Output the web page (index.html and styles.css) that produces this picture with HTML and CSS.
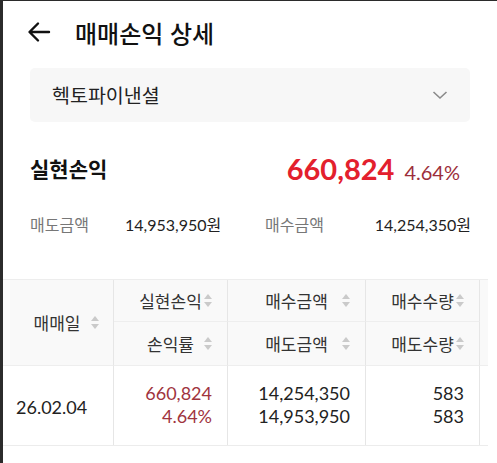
FILE: index.html
```html
<!DOCTYPE html>
<html lang="ko">
<head>
<meta charset="utf-8">
<link rel="stylesheet" href="styles.css">
</head>
<body>
<div class="frame">
  <header class="topbar">
    <svg class="back" width="24" height="24" viewBox="0 0 24 24"><path d="M22 12H3M11 3.5L2.5 12L11 20.5" fill="none" stroke="#111" stroke-width="2.4" stroke-linecap="round" stroke-linejoin="round"/></svg>
    <h1 class="title">매매손익 상세</h1>
  </header>

  <div class="select">
    <span class="select-text">헥토파이낸셜</span>
    <svg class="chev" width="16" height="10" viewBox="0 0 16 10"><path d="M1.5 2L8 8L14.5 2" fill="none" stroke="#8a8a8a" stroke-width="1.6"/></svg>
  </div>

  <div class="summary">
    <span class="summary-label">실현손익</span>
    <div class="summary-value">
      <span class="big">660,824</span>
      <span class="pct">4.64%</span>
    </div>
  </div>

  <div class="amounts">
    <div class="amount">
      <span class="amount-label">매도금액</span>
      <span class="amount-value">14,953,950원</span>
    </div>
    <div class="amount amount-right">
      <span class="amount-label">매수금액</span>
      <span class="amount-value">14,254,350원</span>
    </div>
  </div>

  <div class="table-wrap">
    <div class="table">
      <div class="th c1 span2"><span class="lbl">매매일</span><i class="sort"></i></div>
      <div class="th c2"><span class="lbl">실현손익</span><i class="sort"></i></div>
      <div class="th c3"><span class="lbl">매수금액</span><i class="sort"></i></div>
      <div class="th c4"><span class="lbl">매수수량</span><i class="sort"></i></div>
      <div class="th c5 span2"></div>
      <div class="th c2 row2"><span class="lbl">손익률</span><i class="sort"></i></div>
      <div class="th c3 row2"><span class="lbl">매도금액</span><i class="sort"></i></div>
      <div class="th c4 row2"><span class="lbl">매도수량</span><i class="sort"></i></div>

      <div class="td c1 date">26.02.04</div>
      <div class="td num red"><span>660,824</span><span>4.64%</span></div>
      <div class="td num"><span>14,254,350</span><span>14,953,950</span></div>
      <div class="td num"><span>583</span><span>583</span></div>
      <div class="td c5"></div>
    </div>
  </div>
</div>
</body>
</html>
```

FILE: styles.css
```css
* { box-sizing: border-box; margin: 0; padding: 0; }
html, body { width: 497px; height: 463px; overflow: hidden; background: #fff; }
body {
  font-family: Lato, "Noto Sans CJK KR", sans-serif;
  color: #222;
}
.frame {
  height: 463px;
  border-left: 3px solid #2b2b2b;
  border-top: 1px solid #2b2b2b;
  background: #fff;
}
.topbar {
  display: flex;
  align-items: center;
  height: 64px;
  padding-left: 24px;
}
.back { display: block; margin-right: 24px; margin-top: -2px; }
.title {
  font-family: "Noto Sans CJK KR", sans-serif;
  font-size: 24px;
  font-weight: 500;
  color: #111;
  margin-top: -1px;
}
.select {
  margin: 3px 27px 0 27px;
  height: 54px;
  background: #f7f7f7;
  border-radius: 5px;
  display: flex;
  align-items: center;
  justify-content: space-between;
  padding: 0 22px 0 22px;
}
.select-text {
  font-family: "Noto Sans CJK KR", sans-serif;
  font-size: 19.5px;
  color: #222;
  margin-top: -2px;
}
.chev { display: block; }
.summary {
  display: flex;
  justify-content: space-between;
  align-items: center;
  padding: 0 37px 0 27px;
  margin-top: 30px;
  height: 32px;
}
.summary-label {
  font-family: "Noto Sans CJK KR", sans-serif;
  font-size: 21px;
  font-weight: 700;
  color: #111;
}
.summary-value { display: flex; align-items: baseline; }
.big {
  font-size: 29px;
  font-weight: 700;
  color: #e3202d;
}
.pct {
  font-size: 20px;
  color: #9c2e3a;
  margin-left: 10px;
}
.amounts {
  display: flex;
  padding: 0 26px 0 27px;
  margin-top: 29px;
  height: 22px;
  align-items: center;
  white-space: nowrap;
}
.amount { display: flex; align-items: center; width: 235px; flex: none; }
.amount-right { width: auto; flex: 1; justify-content: space-between; }
.amount-label {
  font-family: "Noto Sans CJK KR", sans-serif;
  font-size: 16px;
  color: #777;
  width: 95px;
}
.amount-right .amount-label { width: auto; }
.amount-value {
  font-size: 16px;
  color: #222;
}
.table-wrap {
  margin-top: 44px;
  width: 485px;
  overflow: hidden;
}
.table {
  display: grid;
  grid-template-columns: 111px 114px 138px 114px 8px;
  grid-template-rows: 42px 44px 79px;
  border-top: 1px solid #ededed;
  border-bottom: 1px solid #ececec;
}
.th {
  background: #f9f9f9;
  display: flex;
  align-items: center;
  padding: 0 15px 0 23px;
  font-family: "Noto Sans CJK KR", sans-serif;
  font-size: 17px;
  color: #333;
  border-right: 1px solid #e6e6e6;
  border-bottom: 1px solid #eeeeee;
}
.th.span2 { grid-row: span 2; }
.th.c1 { padding-left: 20px; padding-right: 14px; }
.th.c5 { padding: 0; border-right: none; }
.lbl { flex: 1; text-align: center; white-space: nowrap; }
.sort {
  display: block;
  width: 8px;
  height: 15px;
  position: relative;
  flex: none;
}
.sort::before, .sort::after {
  content: "";
  position: absolute;
  left: 0;
  border-left: 4px solid transparent;
  border-right: 4px solid transparent;
}
.sort::before { top: 1px; border-bottom: 5px solid #cacaca; }
.sort::after { bottom: 1px; border-top: 5px solid #cacaca; }
.td {
  background: #fff;
  border-right: 1px solid #e6e6e6;
  font-size: 18px;
  color: #222;
}
.td.c5 { border-right: none; }
.date {
  display: flex;
  align-items: center;
  padding-left: 13px;
  padding-top: 3px;
}
.num {
  display: flex;
  flex-direction: column;
  justify-content: center;
  align-items: flex-end;
  padding-right: 15px;
  line-height: 23px;
  padding-bottom: 1px;
}
.red { color: #a0343e; }
```
